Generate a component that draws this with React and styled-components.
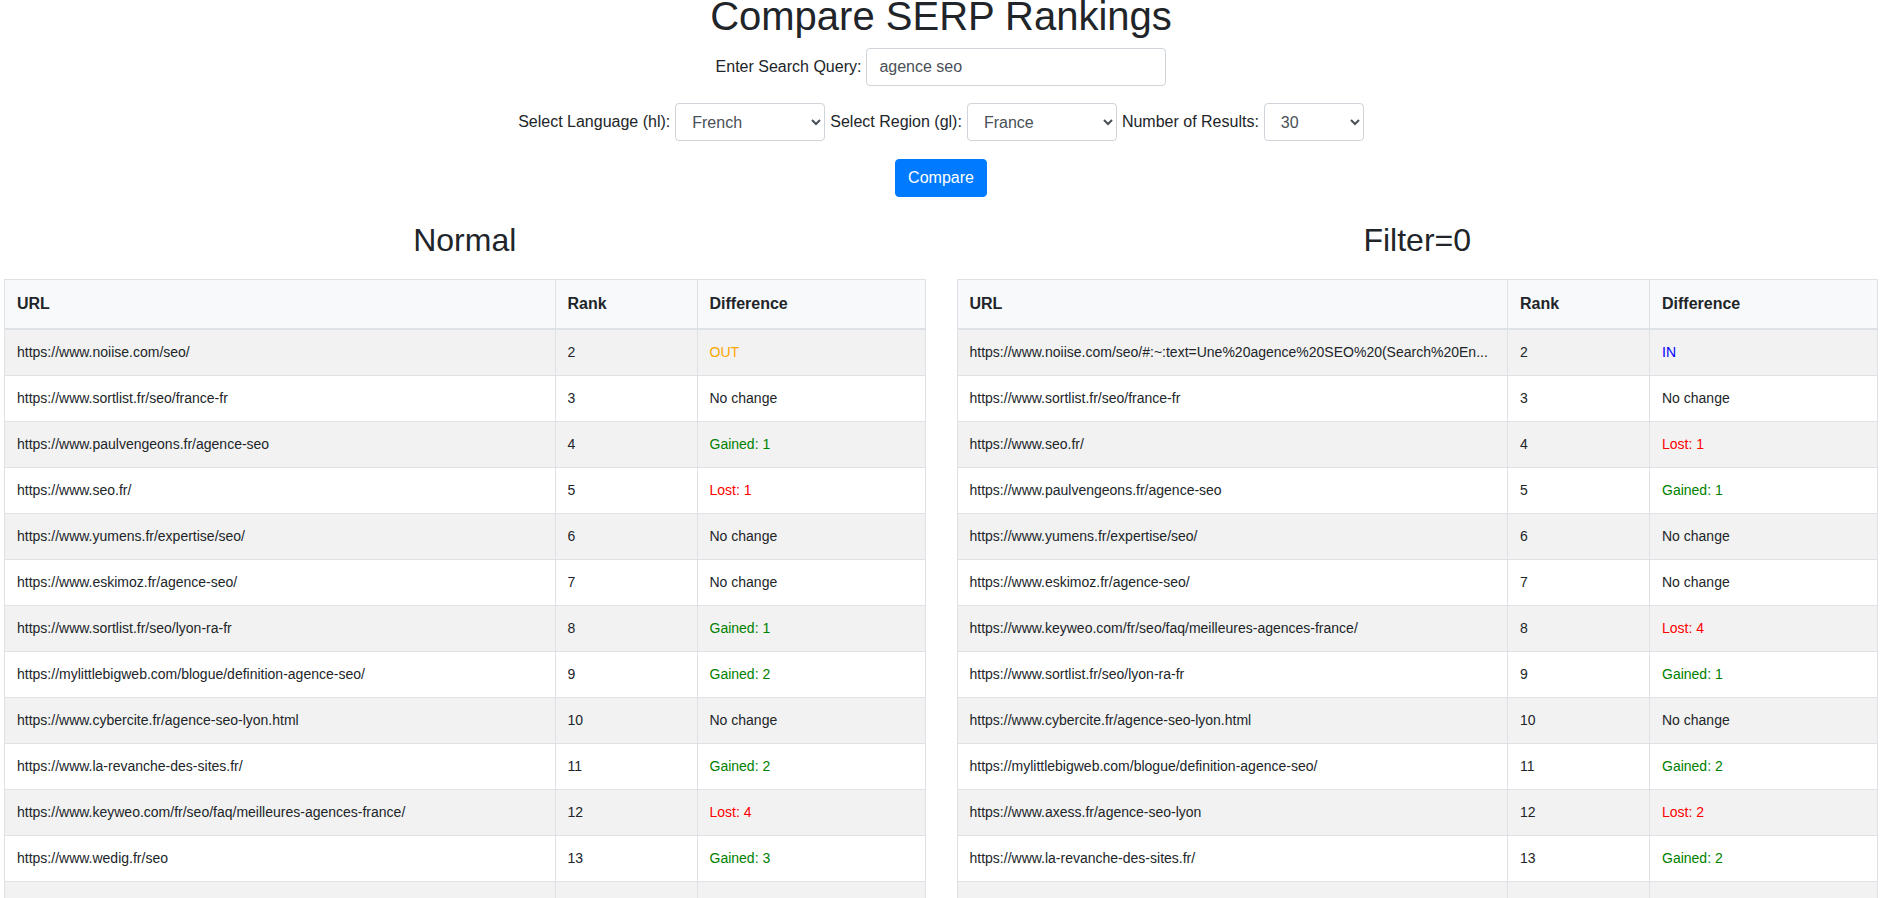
import React from "react";
import styled, { createGlobalStyle } from "styled-components";

const GlobalStyle = createGlobalStyle`
  body {
    margin: 0;
    background: #ffffff;
    color: #212529;
    font-family: "Liberation Sans", Arial, sans-serif;
    font-size: 16px;
    line-height: 1.5;
  }
`;

const colors = {
  text: "#212529",
  muted: "#495057",
  border: "#dee2e6",
  inputBorder: "#ced4da",
  headBg: "#f8f9fa",
  stripe: "#f2f2f2",
  primary: "#007bff",
};

const diffColors = {
  out: "#ffa500",
  in: "#0000ff",
  lost: "#ff0000",
  gained: "#008000",
  same: colors.text,
};

const Page = styled.div`
  padding: 0 11px 0 4px;
`;

const Title = styled.h1`
  margin: 0 0 16px;
  font-size: 40px;
  font-weight: 400;
  line-height: 32px;
  text-align: center;
`;

const SearchForm = styled.form`
  display: flex;
  flex-direction: column;
  align-items: center;
`;

const FieldRow = styled.div`
  display: flex;
  justify-content: center;
  align-items: center;
  gap: 5px;
  margin-bottom: ${(p) => p.$space}px;
`;

const Label = styled.label`
  font-size: 16px;
  white-space: nowrap;
`;

const TextInput = styled.input`
  box-sizing: border-box;
  width: 300px;
  height: 38px;
  padding: 6px 12px;
  border: 1px solid ${colors.inputBorder};
  border-radius: 4px;
  font-family: inherit;
  font-size: 16px;
  color: ${colors.muted};
  outline: none;
`;

const Select = styled.select`
  box-sizing: border-box;
  width: ${(p) => p.$width}px;
  height: 38px;
  padding: 6px 12px;
  border: 1px solid ${colors.inputBorder};
  border-radius: 4px;
  background: #ffffff;
  font-family: inherit;
  font-size: 16px;
  color: ${colors.muted};
`;

const CompareButton = styled.button`
  box-sizing: border-box;
  height: 38px;
  padding: 6px 12px;
  border: 1px solid ${colors.primary};
  border-radius: 4px;
  background: ${colors.primary};
  color: #ffffff;
  font-family: inherit;
  font-size: 16px;
  line-height: 1.5;
  cursor: pointer;
`;

const Results = styled.div`
  display: grid;
  grid-template-columns: 1fr 1fr;
  column-gap: 31px;
  margin-top: 24px;
`;

const Column = styled.section`
  min-width: 0;
`;

const ColumnTitle = styled.h2`
  margin: 0 0 20px;
  font-size: 32px;
  font-weight: 400;
  line-height: 1.2;
  text-align: center;
`;

const Table = styled.table`
  width: 100%;
  table-layout: fixed;
  border-collapse: collapse;
  border: 1px solid ${colors.border};
`;

const HeadCell = styled.th`
  padding: 12px;
  text-align: left;
  font-size: 16px;
  font-weight: 700;
  background: ${colors.headBg};
  border: 1px solid ${colors.border};
  border-bottom: 2px solid ${colors.border};
`;

const Row = styled.tr`
  &:nth-child(odd) {
    background: ${colors.stripe};
  }
`;

const Cell = styled.td`
  padding: 12px;
  font-size: 14px;
  line-height: 21px;
  border: 1px solid ${colors.border};
  white-space: nowrap;
  overflow: hidden;
  text-overflow: ellipsis;
  color: ${(p) => p.$color || colors.text};
`;

const normalRows = [
  ["https://www.noiise.com/seo/", 2, "OUT", "out"],
  ["https://www.sortlist.fr/seo/france-fr", 3, "No change", "same"],
  ["https://www.paulvengeons.fr/agence-seo", 4, "Gained: 1", "gained"],
  ["https://www.seo.fr/", 5, "Lost: 1", "lost"],
  ["https://www.yumens.fr/expertise/seo/", 6, "No change", "same"],
  ["https://www.eskimoz.fr/agence-seo/", 7, "No change", "same"],
  ["https://www.sortlist.fr/seo/lyon-ra-fr", 8, "Gained: 1", "gained"],
  ["https://mylittlebigweb.com/blogue/definition-agence-seo/", 9, "Gained: 2", "gained"],
  ["https://www.cybercite.fr/agence-seo-lyon.html", 10, "No change", "same"],
  ["https://www.la-revanche-des-sites.fr/", 11, "Gained: 2", "gained"],
  ["https://www.keyweo.com/fr/seo/faq/meilleures-agences-france/", 12, "Lost: 4", "lost"],
  ["https://www.wedig.fr/seo", 13, "Gained: 3", "gained"],
  ["https://www.axess.fr/agence-seo-lyon", 14, "Lost: 2", "lost"],
];

const filterRows = [
  ["https://www.noiise.com/seo/#:~:text=Une%20agence%20SEO%20(Search%20En...", 2, "IN", "in"],
  ["https://www.sortlist.fr/seo/france-fr", 3, "No change", "same"],
  ["https://www.seo.fr/", 4, "Lost: 1", "lost"],
  ["https://www.paulvengeons.fr/agence-seo", 5, "Gained: 1", "gained"],
  ["https://www.yumens.fr/expertise/seo/", 6, "No change", "same"],
  ["https://www.eskimoz.fr/agence-seo/", 7, "No change", "same"],
  ["https://www.keyweo.com/fr/seo/faq/meilleures-agences-france/", 8, "Lost: 4", "lost"],
  ["https://www.sortlist.fr/seo/lyon-ra-fr", 9, "Gained: 1", "gained"],
  ["https://www.cybercite.fr/agence-seo-lyon.html", 10, "No change", "same"],
  ["https://mylittlebigweb.com/blogue/definition-agence-seo/", 11, "Gained: 2", "gained"],
  ["https://www.axess.fr/agence-seo-lyon", 12, "Lost: 2", "lost"],
  ["https://www.la-revanche-des-sites.fr/", 13, "Gained: 2", "gained"],
  ["https://www.wedig.fr/seo", 14, "Lost: 1", "lost"],
];

const RankTable = ({ title, rows }) => (
  <Column>
    <ColumnTitle>{title}</ColumnTitle>
    <Table>
      <colgroup>
        <col />
        <col style={{ width: 142 }} />
        <col style={{ width: 228 }} />
      </colgroup>
      <thead>
        <tr>
          <HeadCell>URL</HeadCell>
          <HeadCell>Rank</HeadCell>
          <HeadCell>Difference</HeadCell>
        </tr>
      </thead>
      <tbody>
        {rows.map(([url, rank, diff, kind]) => (
          <Row key={url}>
            <Cell>{url}</Cell>
            <Cell>{rank}</Cell>
            <Cell $color={diffColors[kind]}>{diff}</Cell>
          </Row>
        ))}
      </tbody>
    </Table>
  </Column>
);

const App = () => {
  return (
    <Page>
      <GlobalStyle />
      <Title>Compare SERP Rankings</Title>
      <SearchForm onSubmit={(e) => e.preventDefault()}>
        <FieldRow $space={17}>
          <Label htmlFor="query">Enter Search Query:</Label>
          <TextInput id="query" defaultValue="agence seo" />
        </FieldRow>
        <FieldRow $space={18}>
          <Label htmlFor="hl">Select Language (hl):</Label>
          <Select id="hl" $width={150} defaultValue="fr">
            <option value="en">English</option>
            <option value="fr">French</option>
            <option value="de">German</option>
            <option value="es">Spanish</option>
          </Select>
          <Label htmlFor="gl">Select Region (gl):</Label>
          <Select id="gl" $width={150} defaultValue="fr">
            <option value="us">United States</option>
            <option value="fr">France</option>
            <option value="de">Germany</option>
            <option value="es">Spain</option>
          </Select>
          <Label htmlFor="num">Number of Results:</Label>
          <Select id="num" $width={100} defaultValue="30">
            <option value="10">10</option>
            <option value="20">20</option>
            <option value="30">30</option>
            <option value="50">50</option>
          </Select>
        </FieldRow>
        <CompareButton type="submit">Compare</CompareButton>
      </SearchForm>
      <Results>
        <RankTable title="Normal" rows={normalRows} />
        <RankTable title="Filter=0" rows={filterRows} />
      </Results>
    </Page>
  );
};

export default App;
